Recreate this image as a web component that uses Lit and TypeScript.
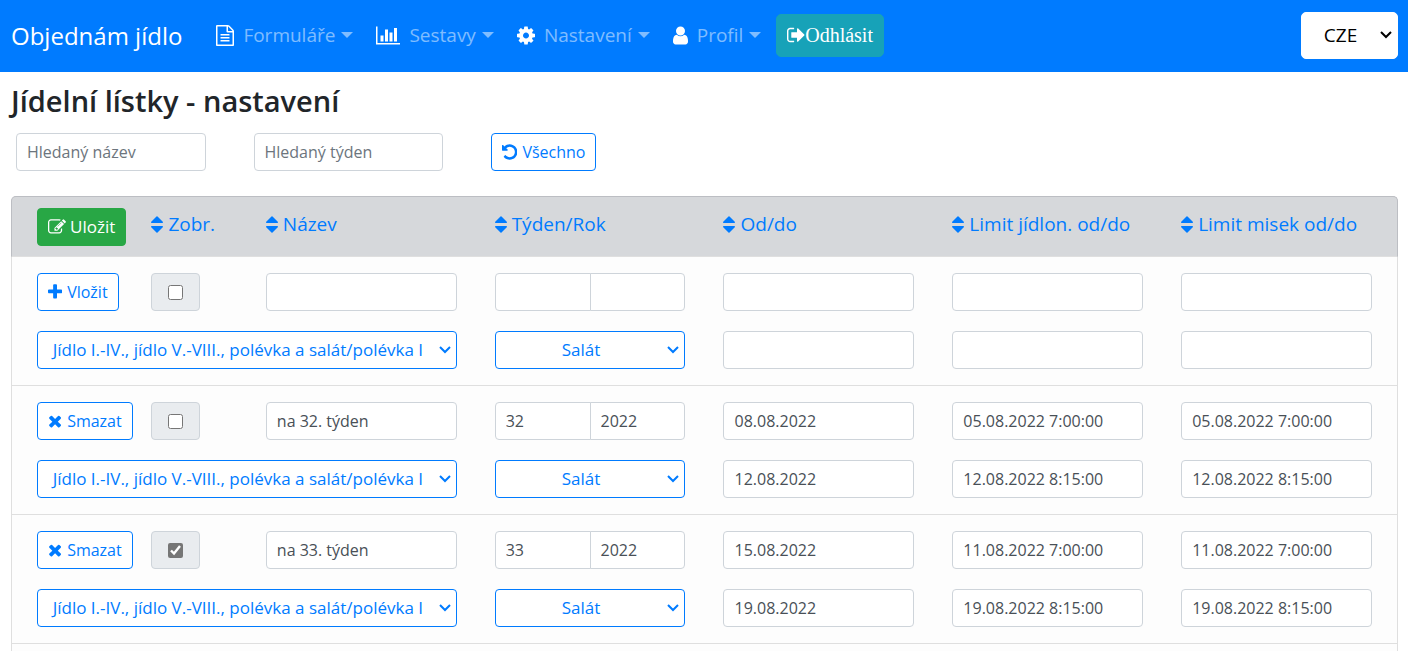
import { LitElement, html, css, svg } from "lit";
import { customElement, property, state } from "lit/decorators.js";

interface Glyph {
  box: string;
  d: string;
}

const GLYPHS: Record<string, Glyph> = {
  file: {
    box: "128 0 1536 1792",
    d: "M1596 380q28 28 48 76t20 88v1152q0 40-28 68t-68 28h-1344q-40 0-68-28t-28-68v-1600q0-40 28-68t68-28h896q40 0 88 20t76 48zm-444-244v376h376q-10-29-22-41l-313-313q-12-12-41-22zm384 1528v-1024h-416q-40 0-68-28t-28-68v-416h-768v1536h1280zm-1024-864q0-14 9-23t23-9h704q14 0 23 9t9 23v64q0 14-9 23t-23 9h-704q-14 0-23-9t-9-23v-64zm736 224q14 0 23 9t9 23v64q0 14-9 23t-23 9h-704q-14 0-23-9t-9-23v-64q0-14 9-23t23-9h704zm0 256q14 0 23 9t9 23v64q0 14-9 23t-23 9h-704q-14 0-23-9t-9-23v-64q0-14 9-23t23-9h704z",
  },
  chart: {
    box: "0 0 2048 1792",
    d: "M640 896v512h-256v-512h256zm384-512v1024h-256v-1024h256zm1024 1152v128h-2048v-1536h128v1408h1920zm-640-896v768h-256v-768h256zm384-384v1152h-256v-1152h256z",
  },
  cog: {
    box: "128 0 1536 1792",
    d: "M1152 896q0-106-75-181t-181-75-181 75-75 181 75 181 181 75 181-75 75-181zm512-109v222q0 12-8 23t-20 13l-185 28q-19 54-39 91 35 50 107 138 10 12 10 25t-9 23q-27 37-99 108t-94 71q-12 0-26-9l-138-108q-44 23-91 38-16 136-29 186-7 28-36 28h-222q-14 0-24.5-8.5t-11.5-21.5l-28-184q-49-16-90-37l-141 107q-10 9-25 9-14 0-25-11-126-114-165-168-7-10-7-23 0-12 8-23 15-21 51-66.5t54-70.5q-27-50-41-99l-183-27q-13-2-21-12.5t-8-23.5v-222q0-12 8-23t19-13l186-28q14-46 39-92-40-57-107-138-10-12-10-24 0-10 9-23 26-36 98.5-107.5t94.5-71.5q13 0 26 10l138 107q44-23 91-38 16-136 29-186 7-28 36-28h222q14 0 24.5 8.5t11.5 21.5l28 184q49 16 90 37l142-107q9-9 24-9 13 0 25 10 129 119 165 170 7 8 7 22 0 12-8 23-15 21-51 66.5t-54 70.5q26 50 41 98l183 28q13 2 21 12.5t8 23.5z",
  },
  user: {
    box: "256 0 1280 1792",
    d: "M1536 1399q0 109-62.5 187t-150.5 78h-854q-88 0-150.5-78t-62.5-187q0-85 8.5-160.5t31.5-152 58.5-131 94-89 134.5-34.5q131 128 313 128t313-128q76 0 134.5 34.5t94 89 58.5 131 31.5 152 8.5 160.5zm-256-887q0 159-112.5 271.5t-271.5 112.5-271.5-112.5-112.5-271.5 112.5-271.5 271.5-112.5 271.5 112.5 112.5 271.5z",
  },
  signout: {
    box: "64 0 1600 1792",
    d: "M704 1440q0 4 1 20t.5 26.5-3 23.5-10 19.5-20.5 6.5h-320q-119 0-203.5-84.5t-84.5-203.5v-704q0-119 84.5-203.5t203.5-84.5h320q13 0 22.5 9.5t9.5 22.5q0 4 1 20t.5 26.5-3 23.5-10 19.5-20.5 6.5h-320q-66 0-113 47t-47 113v704q0 66 47 113t113 47h312l11.5 1 11.5 3 8 5.5 7 9 2 13.5zm928-544q0 26-19 45l-544 544q-19 19-45 19t-45-19-19-45v-288h-448q-26 0-45-19t-19-45v-384q0-26 19-45t45-19h448v-288q0-26 19-45t45-19 45 19l544 544q19 19 19 45z",
  },
  undo: {
    box: "128 0 1536 1792",
    d: "M1664 896q0 156-61 298t-164 245-245 164-298 61q-172 0-327-72.5t-264-204.5q-7-10-6.5-22.5t8.5-20.5l137-138q10-9 25-9 16 2 23 12 73 95 179 147t225 52q104 0 198.5-40.5t163.5-109.5 109.5-163.5 40.5-198.5-40.5-198.5-109.5-163.5-163.5-109.5-198.5-40.5q-98 0-188 35.5t-160 101.5l137 138q31 30 14 69-17 40-59 40h-448q-26 0-45-19t-19-45v-448q0-42 40-59 39-17 69 14l130 129q107-101 244.5-156.5t284.5-55.5q156 0 298 61t245 164 164 245 61 298z",
  },
  edit: {
    box: "0 0 1792 1792",
    d: "M888 1184l116-116-152-152-116 116v56h96v96h56zm440-720q-16-16-33 1l-350 350q-17 17-1 33t33-1l350-350q17-17 1-33zm80 594v190q0 119-84.5 203.5t-203.5 84.5h-832q-119 0-203.5-84.5t-84.5-203.5v-832q0-119 84.5-203.5t203.5-84.5h832q63 0 117 25 15 7 18 23 3 17-9 29l-49 49q-14 14-32 8-23-6-45-6h-832q-66 0-113 47t-47 113v832q0 66 47 113t113 47h832q66 0 113-47t47-113v-126q0-13 9-22l64-64q15-15 35-7t20 29zm-96-738l288 288-672 672h-288v-288zm444 132l-92 92-288-288 92-92q28-28 68-28t68 28l152 152q28 28 28 68t-28 68z",
  },
  plus: {
    box: "192 0 1408 1792",
    d: "M1600 736v192q0 40-28 68t-68 28h-416v416q0 40-28 68t-68 28h-192q-40 0-68-28t-28-68v-416h-416q-40 0-68-28t-28-68v-192q0-40 28-68t68-28h416v-416q0-40 28-68t68-28h192q40 0 68 28t28 68v416h416q40 0 68 28t28 68z",
  },
  times: {
    box: "192 0 1408 1792",
    d: "M1490 1322q0 40-28 68l-136 136q-28 28-68 28t-68-28l-294-294-294 294q-28 28-68 28t-68-28l-136-136q-28-28-28-68t28-68l294-294-294-294q-28-28-28-68t28-68l136-136q28-28 68-28t68 28l294 294 294-294q28-28 68-28t68 28l136 136q28 28 28 68t-28 68l-294 294 294 294q28 28 28 68z",
  },
  sort: {
    box: "384 0 1024 1792",
    d: "M1408 1088q0 26-19 45l-448 448q-19 19-45 19t-45-19l-448-448q-19-19-19-45t19-45 45-19h896q26 0 45 19t19 45zm0-384q0 26-19 45t-45 19h-896q-26 0-45-19t-19-45 19-45l448-448q19-19 45-19t45 19l448 448q19 19 19 45z",
  },
};

@customElement("fa-icon")
export class FaIcon extends LitElement {
  @property() name = "file";

  static styles = css`
    :host {
      display: inline-flex;
      flex: none;
      height: 18px;
    }
    svg {
      height: 100%;
      width: auto;
      fill: currentColor;
    }
  `;

  render() {
    const g = GLYPHS[this.name];
    return html`<svg viewBox=${g.box} aria-hidden="true">${svg`<path d=${g.d}></path>`}</svg>`;
  }
}

interface MenuRecord {
  isNew: boolean;
  shown: boolean;
  name: string;
  week: string;
  year: string;
  from: string[];
  mealLimit: string[];
  bowlLimit: string[];
}

const EMPTY: MenuRecord = {
  isNew: true,
  shown: false,
  name: "",
  week: "",
  year: "",
  from: ["", ""],
  mealLimit: ["", ""],
  bowlLimit: ["", ""],
};

@customElement("app-root")
export class AppRoot extends LitElement {
  @state() private records: MenuRecord[] = [
    EMPTY,
    {
      isNew: false,
      shown: false,
      name: "na 32. týden",
      week: "32",
      year: "2022",
      from: ["08.08.2022", "12.08.2022"],
      mealLimit: ["05.08.2022 7:00:00", "12.08.2022 8:15:00"],
      bowlLimit: ["05.08.2022 7:00:00", "12.08.2022 8:15:00"],
    },
    {
      isNew: false,
      shown: true,
      name: "na 33. týden",
      week: "33",
      year: "2022",
      from: ["15.08.2022", "19.08.2022"],
      mealLimit: ["11.08.2022 7:00:00", "19.08.2022 8:15:00"],
      bowlLimit: ["11.08.2022 7:00:00", "19.08.2022 8:15:00"],
    },
  ];

  private nav = [
    { icon: "file", label: "Formuláře" },
    { icon: "chart", label: "Sestavy" },
    { icon: "cog", label: "Nastavení" },
    { icon: "user", label: "Profil" },
  ];

  private columns = ["Název", "Týden/Rok", "Od/do", "Limit jídlon. od/do", "Limit misek od/do"];

  static styles = css`
    :host {
      display: block;
      height: 100vh;
      overflow: hidden;
      background: #fff;
      color: #212529;
      font-family: "Segoe UI", "Open Sans", "Noto Sans", sans-serif;
      font-size: 16px;
      line-height: 24px;
    }
    * {
      box-sizing: border-box;
    }
    a {
      text-decoration: none;
      color: inherit;
    }
    .bar {
      display: flex;
      align-items: center;
      height: 72px;
      padding: 0 10px 2px 11px;
      background: #007bff;
      color: #fff;
    }
    .brand {
      margin-right: 34px;
      padding-top: 2px;
      font-size: 24px;
      line-height: 36px;
    }
    .menu {
      display: flex;
      align-items: center;
      gap: 23px;
      margin: 0 15px 0 0;
      padding: 0;
      list-style: none;
    }
    .menu a {
      display: flex;
      align-items: center;
      font-size: 19px;
      line-height: 28px;
    }
    .menu fa-icon {
      height: 21px;
      margin-right: 9px;
    }
    .menu .label {
      color: rgba(255, 255, 255, 0.5);
    }
    .caret {
      margin-left: 6px;
      border: 6px solid transparent;
      border-top-color: rgba(255, 255, 255, 0.5);
      border-bottom: 0;
    }
    button {
      display: inline-flex;
      align-items: center;
      gap: 5px;
      height: 38px;
      padding: 0 10px;
      border: 1px solid #007bff;
      border-radius: 4px;
      background: #fff;
      color: #007bff;
      font: inherit;
      white-space: nowrap;
    }
    .logout {
      gap: 0;
      height: 43px;
      border-color: #17a2b8;
      border-radius: 5px;
      background: #17a2b8;
      color: #fff;
      font-family: "Liberation Serif", serif;
      font-size: 20px;
    }
    .logout fa-icon {
      height: 20px;
    }
    .save {
      gap: 4px;
      border-color: #28a745;
      background: #28a745;
      color: #fff;
      font-size: 17px;
    }
    select {
      width: 100%;
      height: 38px;
      padding: 0 28px 0 10px;
      border: 1px solid #007bff;
      border-radius: 4px;
      appearance: none;
      background: #fff
        url("data:image/svg+xml,%3Csvg xmlns='http://www.w3.org/2000/svg' width='14' height='10'%3E%3Cpath d='M2 2l5 5 5-5' fill='none' stroke='%23007bff' stroke-width='2'/%3E%3C/svg%3E")
        no-repeat right 4px center;
      color: #007bff;
      font: inherit;
      font-size: 17px;
      text-align-last: center;
    }
    .lang {
      width: 97px;
      height: 47px;
      margin-left: auto;
      border-color: #fff;
      border-radius: 5px;
      background-image: url("data:image/svg+xml,%3Csvg xmlns='http://www.w3.org/2000/svg' width='14' height='10'%3E%3Cpath d='M2 2l5 5 5-5' fill='none' stroke='%23000' stroke-width='2'/%3E%3C/svg%3E");
      color: #000;
      font-size: 19px;
    }
    h1 {
      margin: 11px 11px 14px;
      font-size: 29px;
      font-weight: 600;
      line-height: 36px;
    }
    .search {
      display: grid;
      grid-template-columns: repeat(6, minmax(0, 1fr));
      gap: 48px;
      padding: 0 15px 0 16px;
    }
    .search button {
      justify-self: start;
    }
    input.text {
      width: 100%;
      min-width: 0;
      height: 38px;
      padding: 0 10px;
      border: 1px solid #ced4da;
      border-radius: 4px;
      background: #fff;
      color: #495057;
      font: inherit;
    }
    input.text::placeholder {
      color: #6c757d;
      opacity: 1;
    }
    .card {
      display: block;
      margin: 25px 10px 0 11px;
      border: 1px solid #dfdfdf;
      border-radius: 5px 5px 0 0;
      background: #fdfdfd;
    }
    thead,
    tbody {
      display: block;
      border-bottom: 1px solid #dfdfdf;
    }
    thead {
      margin: -1px -1px 0;
      padding: 11px 0 10px;
      border: 1px solid #bcbec3;
      border-bottom-color: #dfdfdf;
      border-radius: 5px 5px 0 0;
      background: #d6d8db;
    }
    tbody {
      display: grid;
      gap: 20px;
      padding: 16px 0;
    }
    tr {
      display: grid;
      grid-template-columns: repeat(12, minmax(0, 1fr));
      column-gap: 38px;
      padding: 0 25px;
    }
    th,
    td {
      display: flex;
      padding: 0;
      font-weight: 400;
      text-align: left;
    }
    .two {
      grid-column: span 2;
    }
    .four {
      grid-column: span 4;
    }
    .sort {
      display: flex;
      align-items: center;
      gap: 5px;
      height: 32px;
      color: #007bff;
      font-size: 19px;
      line-height: 28px;
      white-space: nowrap;
    }
    .sort fa-icon {
      height: 21px;
    }
    .check {
      display: flex;
      flex: none;
      align-items: center;
      justify-content: center;
      width: 49px;
      height: 38px;
      border: 1px solid #ced4da;
      border-radius: 4px;
      background: #e9ecef;
    }
    .check input {
      width: 15px;
      height: 15px;
      margin: 0;
      accent-color: #767676;
    }
    .pair input.text:first-child {
      border-radius: 4px 0 0 4px;
    }
    .pair input.text:last-child {
      margin-left: -1px;
      border-radius: 0 4px 4px 0;
    }
  `;

  private text(label: string, value: string) {
    return html`<input class="text" type="text" aria-label=${label} .value=${value} />`;
  }

  private toggle(index: number) {
    this.records = this.records.map((r, i) => (i === index ? { ...r, shown: !r.shown } : r));
  }

  private remove(index: number) {
    if (!this.records[index].isNew) this.records = this.records.filter((_, i) => i !== index);
  }

  private renderRecord(r: MenuRecord, index: number) {
    return html`<tbody>
      <tr>
        <td>
          <button type="button" @click=${() => this.remove(index)}>
            <fa-icon name=${r.isNew ? "plus" : "times"}></fa-icon>${r.isNew ? "Vložit" : "Smazat"}
          </button>
        </td>
        <td>
          <label class="check">
            <input type="checkbox" aria-label="Zobrazit" .checked=${r.shown} @change=${() => this.toggle(index)} />
          </label>
        </td>
        <td class="two">${this.text("Název", r.name)}</td>
        <td class="two pair">${this.text("Týden", r.week)}${this.text("Rok", r.year)}</td>
        <td class="two">${this.text("Od", r.from[0])}</td>
        <td class="two">${this.text("Limit jídlonosičů od", r.mealLimit[0])}</td>
        <td class="two">${this.text("Limit misek od", r.bowlLimit[0])}</td>
      </tr>
      <tr>
        <td class="four">
          <select aria-label="Typ jídelníčku">
            <option>Jídlo I.-IV., jídlo V.-VIII., polévka a salát/polévka I</option>
          </select>
        </td>
        <td class="two">
          <select aria-label="Příloha">
            <option>Salát</option>
          </select>
        </td>
        <td class="two">${this.text("Do", r.from[1])}</td>
        <td class="two">${this.text("Limit jídlonosičů do", r.mealLimit[1])}</td>
        <td class="two">${this.text("Limit misek do", r.bowlLimit[1])}</td>
      </tr>
    </tbody>`;
  }

  private sortLink(label: string) {
    return html`<a class="sort" href="#"><fa-icon name="sort"></fa-icon>${label}</a>`;
  }

  render() {
    return html`
      <nav class="bar">
        <a class="brand" href="#">Objednám jídlo</a>
        <ul class="menu">
          ${this.nav.map(
            (n) => html`<li>
              <a href="#"><fa-icon name=${n.icon}></fa-icon><span class="label">${n.label}</span><span class="caret"></span></a>
            </li>`
          )}
        </ul>
        <button class="logout" type="button"><fa-icon name="signout"></fa-icon>Odhlásit</button>
        <select class="lang" aria-label="Jazyk">
          <option>CZE</option>
        </select>
      </nav>
      <main>
        <h1>Jídelní lístky - nastavení</h1>
        <form class="search" @submit=${(e: Event) => e.preventDefault()}>
          <input class="text" type="text" placeholder="Hledaný název" aria-label="Hledaný název" />
          <input class="text" type="text" placeholder="Hledaný týden" aria-label="Hledaný týden" />
          <button type="reset"><fa-icon name="undo"></fa-icon>Všechno</button>
        </form>
        <table class="card">
          <thead>
            <tr>
              <th>
                <button class="save" type="button"><fa-icon name="edit"></fa-icon>Uložit</button>
              </th>
              <th>${this.sortLink("Zobr.")}</th>
              ${this.columns.map((c) => html`<th class="two">${this.sortLink(c)}</th>`)}
            </tr>
          </thead>
          ${this.records.map((r, i) => this.renderRecord(r, i))}
          <tbody></tbody>
        </table>
      </main>
    `;
  }
}
